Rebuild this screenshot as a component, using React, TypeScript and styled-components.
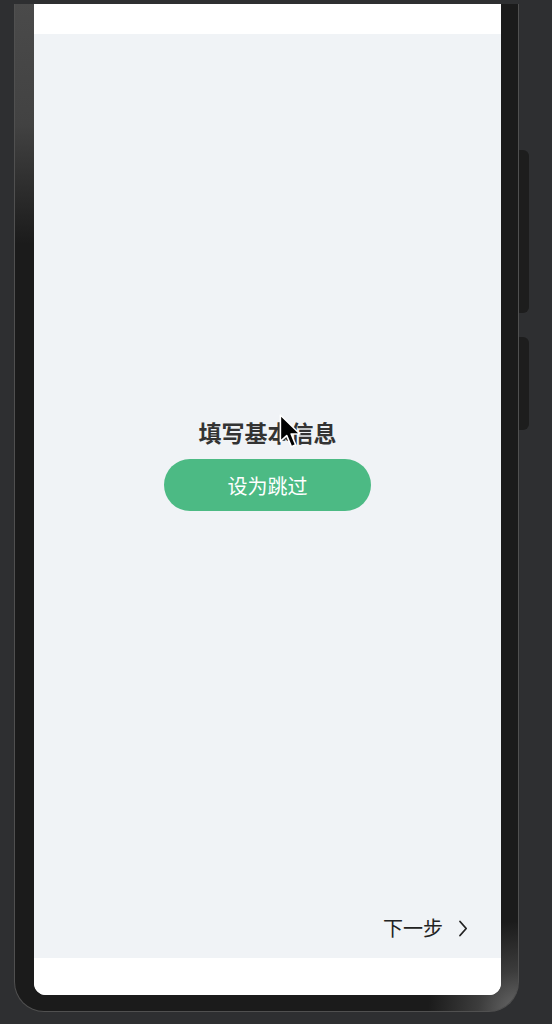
import React from 'react';
import styled, { createGlobalStyle } from 'styled-components';

const GlobalStyle = createGlobalStyle`
  html, body {
    margin: 0;
    padding: 0;
    background: #2e2f31;
    font-family: "Noto Sans CJK SC", "Noto Sans", sans-serif;
  }
`;

const Page = styled.div`
  width: 552px;
  height: 1024px;
  padding-top: 4px;
  box-sizing: border-box;
  background: #2e2f31;
  overflow: hidden;
`;

const Phone = styled.div`
  position: relative;
  margin-left: 14px;
  width: 505px;
  height: 1008px;
  box-sizing: border-box;
  padding: 0 17px 16px 19px;
  border: 1px solid #505050;
  border-top: 0;
  border-radius: 0 0 30px 30px;
  background:
    linear-gradient(to bottom, #4a4a4a 0, #424242 120px, #1b1b1b 240px) left top / 20px 100% no-repeat,
    radial-gradient(circle at 100% 100%, #6a6a6a 0, #3c3c3c 40px, rgba(27, 27, 27, 0) 90px),
    #1b1b1b;
`;

const SideButton = styled.div<{ $top: number; $height: number }>`
  position: absolute;
  right: -11px;
  top: ${p => p.$top}px;
  width: 10px;
  height: ${p => p.$height}px;
  background: #1d1d1d;
  border-radius: 0 6px 6px 0;
`;

const Screen = styled.div`
  height: 100%;
  display: flex;
  flex-direction: column;
  background: #ffffff;
  border-radius: 0 0 12px 12px;
  overflow: hidden;
`;

const StatusBar = styled.div`
  height: 30px;
  flex-shrink: 0;
  background: #ffffff;
`;

const Content = styled.div`
  position: relative;
  flex: 1;
  display: flex;
  flex-direction: column;
  align-items: center;
  background: #f0f3f6;
`;

const Intro = styled.div`
  display: flex;
  flex-direction: column;
  align-items: center;
  padding-top: 382px;
`;

const Title = styled.h1`
  margin: 0;
  font-size: 23px;
  line-height: 32px;
  font-weight: 700;
  color: #333333;
`;

const SkipButton = styled.button`
  margin-top: 11px;
  width: 207px;
  height: 52px;
  border: 0;
  border-radius: 26px;
  background: #4cba84;
  color: #ffffff;
  font-family: inherit;
  font-size: 20px;
  cursor: pointer;
`;

const Footer = styled.div`
  margin-top: auto;
  align-self: stretch;
  display: flex;
  justify-content: flex-end;
  padding: 0 33px 17px 0;
`;

const NextLink = styled.a`
  display: flex;
  align-items: center;
  gap: 15px;
  font-size: 20px;
  line-height: 26px;
  color: #222222;
  cursor: pointer;
`;

const HomeBar = styled.div`
  height: 37px;
  flex-shrink: 0;
  background: #ffffff;
`;

const Cursor = styled.svg`
  position: absolute;
  left: 245px;
  top: 380px;
`;

const App: React.FC = () => {
  return (
    <>
      <GlobalStyle />
      <Page>
        <Phone>
          <SideButton $top={146} $height={163} />
          <SideButton $top={333} $height={93} />
          <Screen>
            <StatusBar />
            <Content>
              <Intro>
                <Title>填写基本信息</Title>
                <SkipButton>设为跳过</SkipButton>
              </Intro>
              <Footer>
                <NextLink>
                  下一步
                  <svg width="10" height="17" viewBox="0 0 10 17" fill="none">
                    <path d="M2 1.5 L8.2 8.5 L2 15.5" stroke="#222" strokeWidth="1.8" strokeLinecap="round" strokeLinejoin="round" />
                  </svg>
                </NextLink>
              </Footer>
              <Cursor width="26" height="38" viewBox="0 0 24 36">
                <path
                  d="M1 1 L1 26 L7 20.5 L11.5 31 L15.5 29.2 L11.2 19 L19.5 19 Z"
                  fill="#000"
                  stroke="#fff"
                  strokeWidth="1.5"
                  strokeLinejoin="round"
                />
              </Cursor>
            </Content>
            <HomeBar />
          </Screen>
        </Phone>
      </Page>
    </>
  );
};

export default App;
